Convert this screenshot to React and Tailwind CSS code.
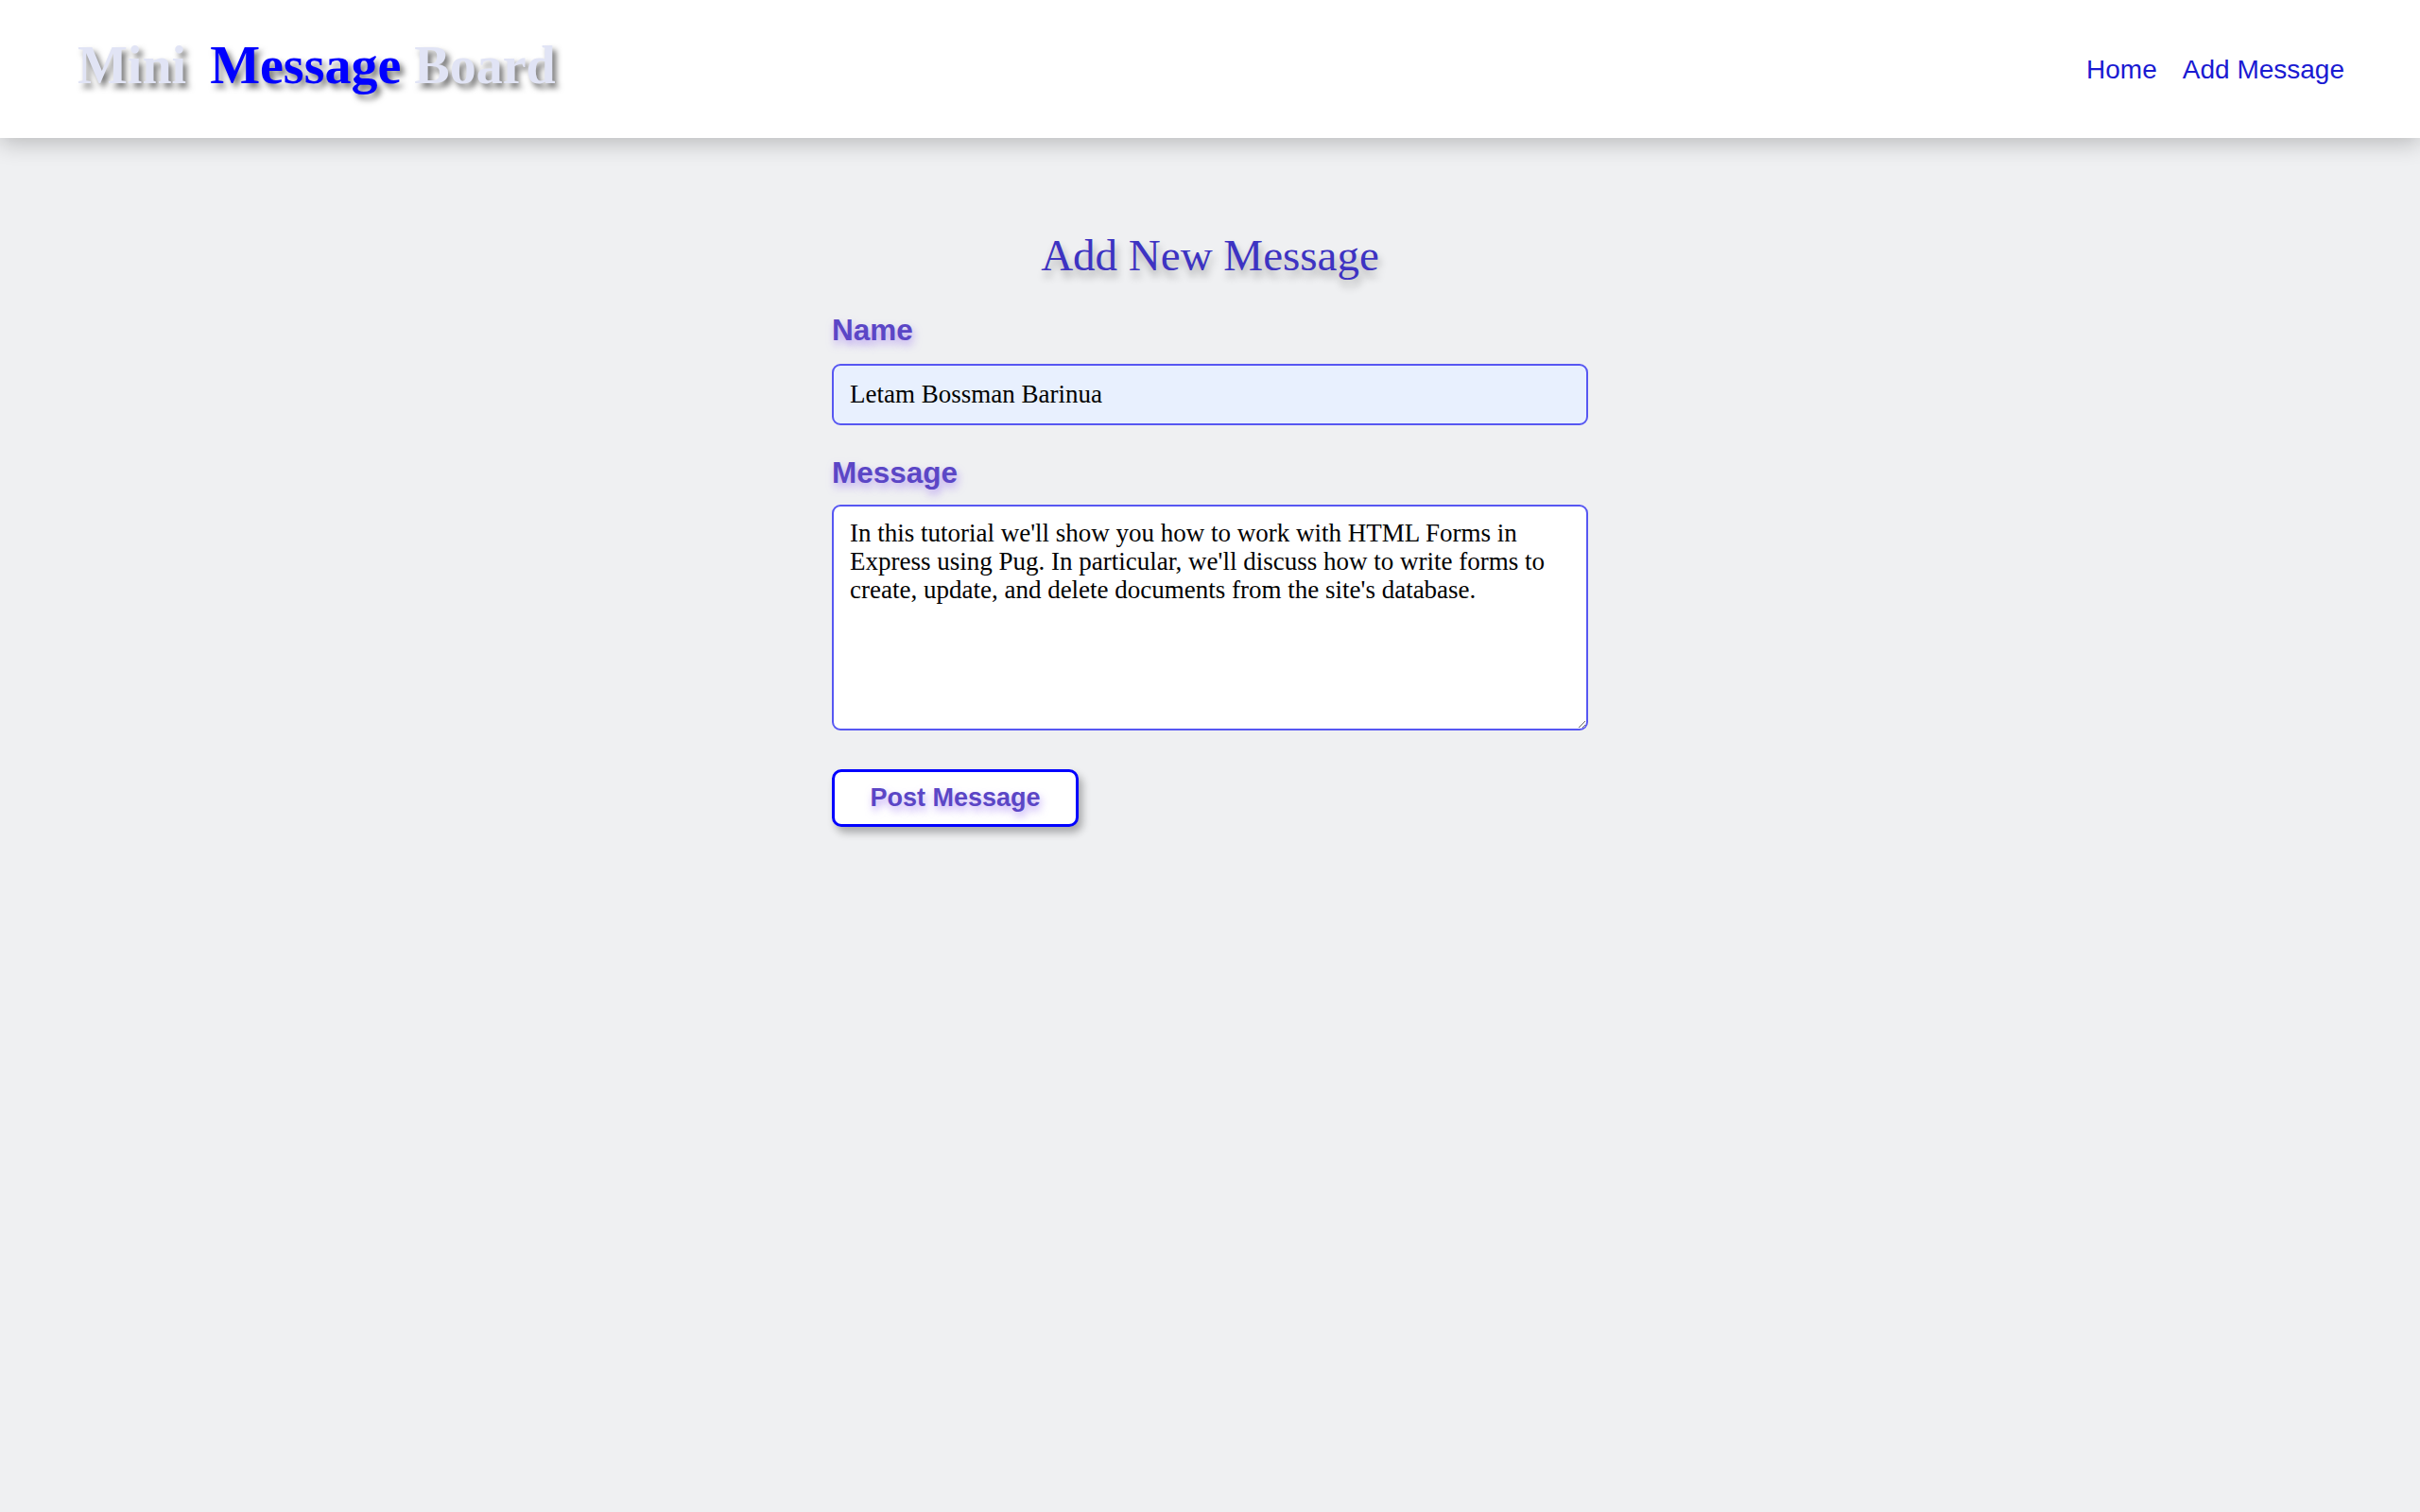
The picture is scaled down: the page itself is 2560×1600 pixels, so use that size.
import React from "react";

export default function App() {
  const serif = { fontFamily: '"Liberation Serif", "DejaVu Serif", serif' };
  return (
    <div className="min-h-screen bg-[#eff0f2] font-['Liberation_Sans',Arial,sans-serif]">
      <header className="relative z-10 flex h-[146px] items-center justify-between bg-white pl-[82px] pr-[80px] shadow-[0_6px_22px_rgba(0,0,0,0.22)]">
        <h1
          className="mb-[8px] text-[56px] font-bold leading-none text-[#e1e4f5] [text-shadow:4px_5px_6px_rgba(0,0,0,0.55)]"
          style={serif}
        >
          <span>Mini</span>
          <span className="ml-[11px]"> </span>
          <span className="text-[#0000ff]">Message</span> <span>Board</span>
        </h1>
        <nav className="flex items-center gap-[27px] pt-[2px] text-[28px] text-[#1a1ad2]">
          <a href="#">Home</a>
          <a href="#">Add Message</a>
        </nav>
      </header>

      <main className="flex flex-col items-center pt-[101px]">
        <h2
          className="text-[47px] leading-none text-[#3d33c2] [text-shadow:2px_7px_8px_rgba(0,0,0,0.3)]"
          style={serif}
        >
          Add New Message
        </h2>
        <form className="mt-[40px] flex w-[800px] flex-col">
          <label className="text-[31.5px] font-bold leading-none text-[#5b46c6] [text-shadow:2px_5px_8px_rgba(150,110,240,0.6)]">
            Name
          </label>
          <input
            className="mt-[19px] block h-[65px] w-full rounded-[9px] border-2 border-[#5757f2] bg-[#e8f0fe] px-[17px] text-[27px] text-black outline-none"
            style={serif}
            defaultValue="Letam Bossman Barinua"
          />
          <label className="mt-[35px] text-[31.5px] font-bold leading-none text-[#5b46c6] [text-shadow:2px_5px_8px_rgba(150,110,240,0.6)]">
            Message
          </label>
          <textarea
            className="mt-[18px] block h-[239px] w-full rounded-[9px] border-2 border-[#5757f2] bg-white px-[17px] pt-[13px] text-[27px] leading-[30px] text-black outline-none"
            style={serif}
            defaultValue="In this tutorial we'll show you how to work with HTML Forms in Express using Pug. In particular, we'll discuss how to write forms to create, update, and delete documents from the site's database."
          />
          <div className="mt-[41px]">
            <button
              type="button"
              className="h-[61px] w-[261px] rounded-[10px] border-[3px] border-[#0000ff] bg-white text-[27px] font-bold text-[#5b46c6] shadow-[4px_6px_8px_rgba(0,0,0,0.3)] [text-shadow:2px_5px_8px_rgba(150,110,240,0.6)]"
            >
              Post Message
            </button>
          </div>
        </form>
      </main>
    </div>
  );
}
